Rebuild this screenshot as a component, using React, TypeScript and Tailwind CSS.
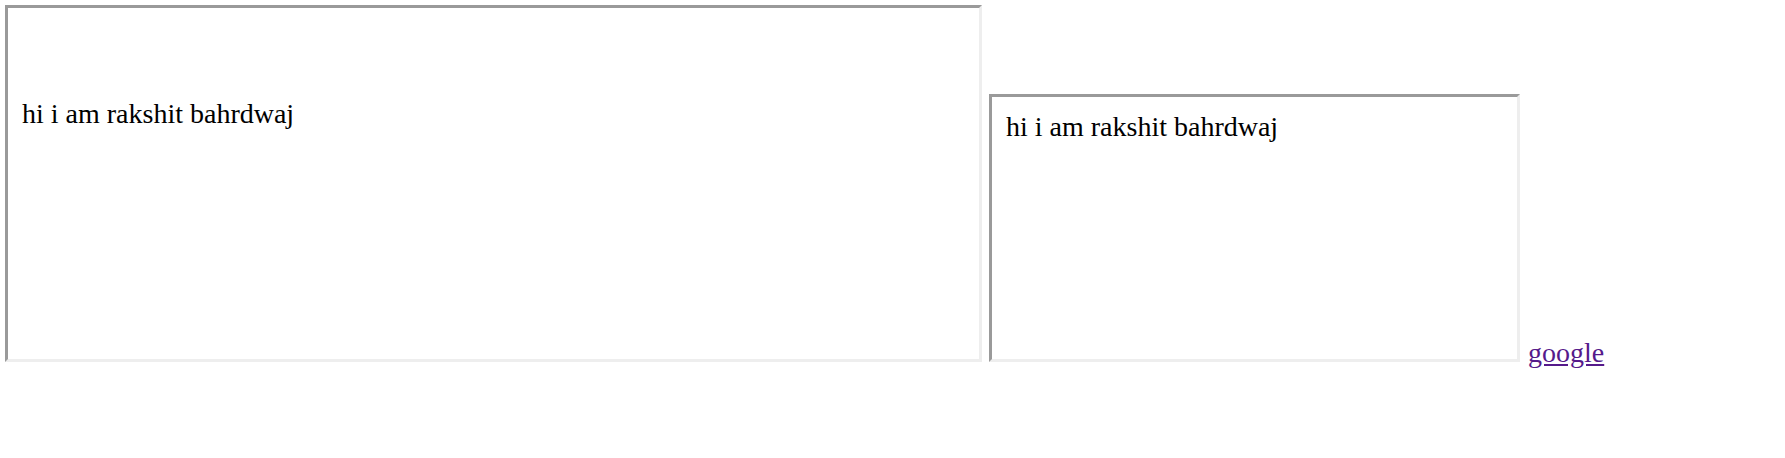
export default function App() {
  return (
    <div className="min-h-screen bg-white font-['Liberation_Serif',serif] text-[28px] text-black">
      <div className="flex items-end pl-[5px] pt-[5px]">
        {/* first frame */}
        <div className="h-[357px] w-[977px] shrink-0 border-[3px] border-t-[#9a9a9a] border-l-[#9a9a9a] border-b-[#eeeeee] border-r-[#eeeeee] bg-white px-[14px] pt-[85px]">
          <p className="leading-normal">hi i am rakshit bahrdwaj</p>
        </div>

        {/* second frame */}
        <div className="ml-[7px] h-[268px] w-[531px] shrink-0 border-[3px] border-t-[#9a9a9a] border-l-[#9a9a9a] border-b-[#eeeeee] border-r-[#eeeeee] bg-white px-[14px] pt-[9px]">
          <p className="leading-normal">hi i am rakshit bahrdwaj</p>
        </div>

        <a href="#" className="ml-[8px] -mb-[5px] leading-[28px] text-[#551a8b] underline">
          google
        </a>
      </div>
    </div>
  )
}
